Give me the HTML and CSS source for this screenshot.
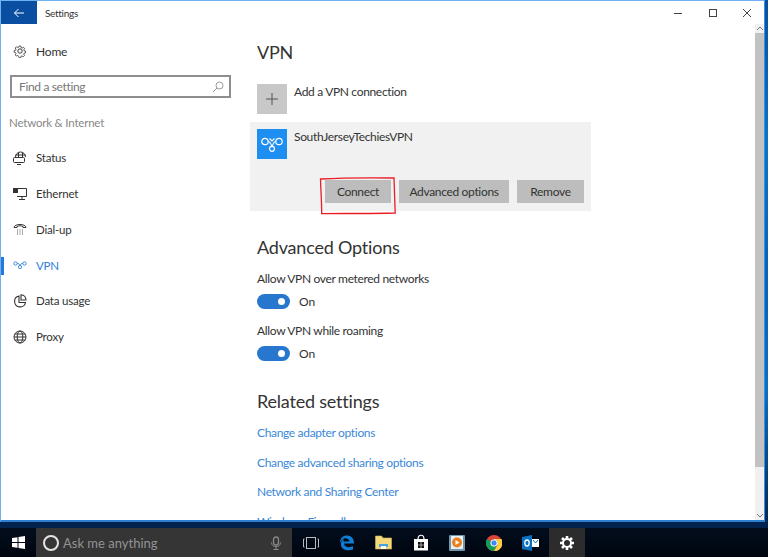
FILE: index.html
```html
<!DOCTYPE html>
<html lang="en">
<head>
<meta charset="utf-8">
<title>Settings</title>
<link rel="stylesheet" href="styles.css">
</head>
<body>
<div class="screen">
  <div class="window">
    <header class="titlebar">
      <div class="back"><svg width="12" height="12" viewBox="0 0 12 12"><path d="M11 6H1.500M5.500 2L1.500 6l4 4" fill="none" stroke="#fff" stroke-width="1"/></svg></div>
      <span class="title">Settings</span>
      <div class="controls">
        <svg width="10" height="10" viewBox="0 0 10 10"><path d="M1 5.500h8" stroke="#444" stroke-width="1"/></svg>
        <svg width="10" height="10" viewBox="0 0 10 10"><rect x="1.500" y="1.500" width="7" height="7" fill="none" stroke="#444"/></svg>
        <svg width="10" height="10" viewBox="0 0 10 10"><path d="M1 1l8 8M9 1l-8 8" stroke="#444" stroke-width="1"/></svg>
      </div>
    </header>
    <div class="body">
      <nav class="side">
        <a class="home">
          <svg class="ico" width="14" height="14" viewBox="0 0 16 16"><g fill="none" stroke="#333" stroke-width="1.100"><circle cx="8" cy="8" r="2.500"/><path d="M6.800 1.500h2.400l.4 2 1.300.6 1.800-1 1.500 1.700-1.100 1.700.4 1.200 1.900.5v2.300l-1.900.5-.5 1.300 1 1.700-1.600 1.600-1.700-1-1.300.5-.5 1.900H6.800l-.5-1.900L5 13.800l-1.700 1-1.600-1.600 1-1.700-.5-1.300-1.900-.5V7.400L2.200 7l.5-1.300-1-1.700 1.600-1.600 1.700 1 1.300-.5z" transform="translate(1.100 1.100) scale(.86)"/></g></svg>
          <span>Home</span>
        </a>
        <div class="search"><span>Find a setting</span>
          <svg width="12" height="12" viewBox="0 0 12 12"><circle cx="7.500" cy="4.500" r="3.500" fill="none" stroke="#999"/><path d="M5 7l-4 4" stroke="#999"/></svg>
        </div>
        <div class="group">Network &amp; Internet</div>
        <ul class="menu">
          <li><svg class="ico" width="14" height="14" viewBox="0 0 14 14"><g fill="none" stroke="#333"><path d="M2.500 6a5 5 0 0 1 10 0M5.500 1.500v5M9.500 1.500v5M2.500 4h10"/><rect x=".5" y="6.500" width="11" height="5" rx="1"/><path d="M4 13.500h4"/></g></svg><span>Status</span></li>
          <li><svg class="ico" width="14" height="14" viewBox="0 0 14 14"><g fill="none" stroke="#333"><path d="M4 1.500h9.500v8H4M6 12.500h6M9 9.500v3"/><rect x=".5" y="1.500" width="4" height="4" fill="#333"/></g></svg><span>Ethernet</span></li>
          <li><svg class="ico" width="14" height="14" viewBox="0 0 14 14"><path d="M1 5.500C1 1.500 13 1.500 13 5.500H10V4.500C8 3.500 6 3.500 4 4.500v1z" fill="none" stroke="#333"/><path d="M4 8h1M6.500 8h1M9 8h1M4 10h1M6.500 10h1M9 10h1M4 12h1M6.500 12h1M9 12h1" stroke="#555"/></svg><span>Dial-up</span></li>
          <li class="active"><svg class="ico" width="14" height="14" viewBox="0 0 14 14"><g fill="none" stroke="#2f80d8" stroke-width=".9"><circle cx="2.500" cy="5.500" r="1.700"/><circle cx="11.500" cy="5.500" r="1.700"/><circle cx="7" cy="9" r="1.600"/><path d="M4.200 5.500h1.300L7 7.400l1.500-1.900h1.300"/></g></svg><span>VPN</span></li>
          <li><svg class="ico" width="14" height="14" viewBox="0 0 14 14"><g fill="none" stroke="#333" stroke-width="1.100"><path d="M6 2a5.500 5.500 0 1 0 6.500 6.500H6z"/><path d="M8 .8a5.500 5.500 0 0 1 5 5.200H8z"/></g></svg><span>Data usage</span></li>
          <li><svg class="ico" width="14" height="14" viewBox="0 0 14 14"><g fill="none" stroke="#333"><circle cx="7" cy="7" r="6"/><ellipse cx="7" cy="7" rx="2.800" ry="6"/><path d="M1 7h12M1.800 4h10.400M1.800 10h10.400"/></g></svg><span>Proxy</span></li>
        </ul>
      </nav>
      <main class="content">
        <h1 class="page-title">VPN</h1>
        <div class="add-row">
          <div class="tile tile-add"><svg width="14" height="14" viewBox="0 0 14 14"><path d="M7 1v12M1 7h12" stroke="#555" stroke-width="1"/></svg></div>
          <span class="row-label">Add a VPN connection</span>
        </div>
        <section class="vpn-card">
          <div class="vpn-top">
            <div class="tile tile-vpn"><svg width="22" height="16" viewBox="0 0 22 16"><g fill="none" stroke="#fff" stroke-width="1.200"><circle cx="4" cy="5.500" r="3.200"/><circle cx="18" cy="5.500" r="3.200"/><circle cx="11" cy="12.800" r="2.500"/><path d="M7.200 5.500c1.600 0 2.400 1.600 3.800 4.800M14.800 5.500c-1.600 0-2.400 1.600-3.800 4.800M8.500 2.500L11 5l2.500-2.500"/></g></svg></div>
            <span class="row-label">SouthJerseyTechiesVPN</span>
          </div>
          <div class="vpn-actions">
            <button class="btn btn-connect">Connect</button>
            <button class="btn btn-adv">Advanced options</button>
            <button class="btn btn-rem">Remove</button>
            <svg class="scribble" width="78" height="38" viewBox="0 0 78 38"><path d="M1.500 2C20 1 58 .8 75 1c.4 11 .8 23 1.200 35-20 .6-50 .4-73.500 .6C2.700 25 1.800 13 1.500 2z" fill="none" stroke="#ea1c26" stroke-width="1.300"/></svg>
          </div>
        </section>
        <h2 class="section first">Advanced Options</h2>
        <div class="opt-label">Allow VPN over metered networks</div>
        <div class="toggle-row"><span class="toggle"></span><span>On</span></div>
        <div class="opt-label second">Allow VPN while roaming</div>
        <div class="toggle-row"><span class="toggle"></span><span>On</span></div>
        <h2 class="section related">Related settings</h2>
        <a class="link">Change adapter options</a>
        <a class="link">Change advanced sharing options</a>
        <a class="link">Network and Sharing Center</a>
        <a class="link">Windows Firewall</a>
      </main>
      <div class="scrollbar"><div class="arrow"><svg width="8" height="5" viewBox="0 0 8 5"><path d="M1 4l3-3 3 3" fill="none" stroke="#777"/></svg></div><div class="thumb"></div><div class="track"></div><div class="arrow"><svg width="8" height="5" viewBox="0 0 8 5"><path d="M1 1l3 3 3-3" fill="none" stroke="#777"/></svg></div></div>
    </div>
  </div>
  <footer class="taskbar">
    <div class="start"><svg width="13" height="13" viewBox="0 0 13 13"><path d="M0 2l5.500-.8V6H0zM6.500 1.100L13 0v6H6.500zM0 7h5.500v4.800L0 11zM6.500 7H13v6l-6.500-1z" fill="#fff"/></svg></div>
    <div class="ask">
      <span class="cortana"></span>
      <span class="ask-text">Ask me anything</span>
      <svg width="10" height="14" viewBox="0 0 10 14"><rect x="2.500" y="1" width="5" height="8" rx="2.500" fill="none" stroke="#8a8a8a" stroke-width="1.300"/><path d="M.5 6.500C.5 12 9.500 12 9.500 6.500M5 10.500V13M2.500 13.500h5" fill="none" stroke="#8a8a8a"/></svg>
    </div>
    <div class="tasks">
      <div class="task"><svg width="16" height="12" viewBox="0 0 16 12"><g fill="none" stroke="#bbb"><rect x="3.500" y=".5" width="9" height="11"/><path d="M1.500 2H.5v8h1M14.500 2h1v8h-1"/></g></svg></div>
      <div class="task"><svg width="16" height="16" viewBox="0 0 16 16"><path d="M1 8C1 3 4 .5 8 .5c4.500 0 7 3 7 8H5c.2 4 6 4.500 9 2.500v3.500c-5 2-12.500 .5-12-5.500C2 6 3.500 5 5 4c-.5 1-.5 2-.5 2.500h6C10.500 3.500 6 2 3.500 4.500 2.500 5.500 1.500 6.500 1 8z" fill="#0f7fd6"/></svg></div>
      <div class="task"><svg width="17" height="15" viewBox="0 0 17 15"><path d="M.5 1h6l1.500 2h8.500v11H.5z" fill="#f5d77c" stroke="#d9b452" stroke-width=".6"/><rect x="4" y="9" width="9" height="3" fill="#4aa3d8"/><rect x="6" y="11" width="5" height="3" fill="#fff"/></svg></div>
      <div class="task"><svg width="16" height="17" viewBox="0 0 16 17"><path d="M1 5h14v11.500H1z" fill="#fff"/><path d="M5 5c0-5 6-5 6 0" fill="none" stroke="#fff" stroke-width="1.200"/><path d="M5 8h2.700v2.700H5zM8.300 8H11v2.700H8.300zM5 11.300h2.700V14H5zM8.300 11.300H11V14H8.300z" fill="#111"/></svg></div>
      <div class="task"><svg width="16" height="16" viewBox="0 0 16 16"><rect width="16" height="16" rx="1" fill="#6e97ac"/><rect x="2" y="1" width="12" height="13" fill="#e9f0f3"/><circle cx="8" cy="7.500" r="5" fill="#ef7f1a"/><path d="M6.500 5l4 2.500-4 2.500z" fill="#fff"/></svg></div>
      <div class="task"><svg width="16" height="16" viewBox="0 0 16 16"><circle cx="8" cy="8" r="8" fill="#db4437"/><path d="M8 8L1 12A8 8 0 0 1 1 4z" fill="#0f9d58"/><path d="M8 8L1.100 12A8 8 0 0 0 8 16l3.500-7z" fill="#0f9d58"/><path d="M8 4h7.500A8 8 0 0 1 8 16l3.500-6z" fill="#ffcd40"/><circle cx="8" cy="8" r="3.200" fill="#4285f4" stroke="#fff"/></svg></div>
      <div class="task"><svg width="17" height="16" viewBox="0 0 17 16"><path d="M0 2l10-2v16L0 14z" fill="#0b6fc2"/><ellipse cx="5" cy="8" rx="2.200" ry="3" fill="none" stroke="#fff" stroke-width="1.300"/><rect x="10" y="4" width="7" height="8" fill="#fff"/><path d="M11 5l2.500 3L16 5" fill="none" stroke="#0b6fc2"/></svg></div>
      <div class="task task-active"><svg width="16" height="16" viewBox="0 0 16 16"><circle cx="8" cy="8" r="4" fill="none" stroke="#fff" stroke-width="2"/><path d="M8 1v3M8 12v3M1 8h3M12 8h3M3 3l2.200 2.200M10.800 10.800L13 13M13 3l-2.200 2.200M5.200 10.800L3 13" stroke="#fff" stroke-width="2.600"/></svg></div>
    </div>
  </footer>
</div>
</body>
</html>
```
FILE: styles.css
```css
* { box-sizing: border-box; }
html, body { margin: 0; padding: 0; }
body { width: 768px; height: 557px; overflow: hidden; font-family: Lato, "Open Sans", sans-serif; color: #333; }
.screen { width: 768px; height: 557px; display: flex; flex-direction: column; background: linear-gradient(#0a4f9e, #0a74c6 25%, #0a62b4 50%, #0a70c2 70%, #02244c 528px); }
.window { width: 765px; height: 522px; background: #fff; border: 1px solid #6fb1f3; border-width: 1px 1px 2px 1px; border-bottom-color: #2d7fd0; border-right-color: #3f8fe0; display: flex; flex-direction: column; overflow: hidden; flex: none; }
.titlebar { height: 23px; flex: none; display: flex; align-items: center; }
.back { width: 36px; height: 23px; background: #0a4ea1; display: flex; align-items: center; justify-content: center; }
.title { font-size: 10px; letter-spacing: -0.3px; margin-left: 8px; color: #333; }
.controls { margin-left: auto; display: flex; gap: 24.500px; padding-right: 12px; align-items: center; }
.body { flex: 1; display: flex; min-height: 0; }
.side { width: 249px; flex: none; display: flex; flex-direction: column; }
.home { display: flex; align-items: center; height: 20px; margin-top: 17px; padding-left: 12px; gap: 9px; font-size: 12px; letter-spacing: -0.2px; }
.search { margin: 14px 0 0 9px; width: 221px; height: 23px; border: 2px solid #8e8e8e; display: flex; align-items: center; justify-content: space-between; padding: 0 5px 0 7px; font-size: 12px; letter-spacing: -0.35px; color: #777; }
.group { margin: 17px 0 0 8px; font-size: 11.500px; letter-spacing: -0.2px; line-height: 16px; color: #888; }
.menu { list-style: none; margin: 9px 0 0; padding: 0; }
.menu li { height: 35.750px; display: flex; align-items: center; padding-left: 12px; font-size: 11.500px; letter-spacing: -0.2px; gap: 9px; }
.menu .active { color: #2f80d8; position: relative; }
.menu .active::before { content: ""; position: absolute; left: 0; top: 10px; width: 3px; height: 18px; background: #2679d4; }
.content { flex: 1; padding: 14px 0 0 7px; min-width: 0; overflow: hidden; }
.page-title { margin: 0; font-size: 18px; letter-spacing: -0.2px; font-weight: 400; line-height: 28px; color: #333; }
.add-row { display: flex; margin-top: 18px; gap: 7px; }
.tile { width: 30px; height: 30px; flex: none; display: flex; align-items: center; justify-content: center; }
.tile-add { background: #c8c8c8; }
.row-label { font-size: 12px; letter-spacing: -0.33px; line-height: 16px; }
.vpn-card { width: 341px; height: 89px; background: #f1f1f1; margin: 8px 0 0 -7px; padding: 7px 7px 0 7px; display: flex; flex-direction: column; }
.vpn-top { display: flex; gap: 7px; }
.tile-vpn { background: #1f8ef1; }
.vpn-actions { display: flex; justify-content: flex-end; margin-top: 21px; gap: 8px; position: relative; }
.btn { height: 23px; border: 0; background: #bdbdbd; font: 12px Lato, "Open Sans", sans-serif; letter-spacing: -0.33px; color: #333; padding: 0; }
.btn-connect { width: 66px; }
.btn-adv { width: 110px; }
.btn-rem { width: 67px; }
.scribble { position: absolute; left: 62px; top: -3px; }
.section { margin: 0; font-size: 18px; letter-spacing: -0.2px; font-weight: 400; line-height: 26px; color: #333; }
.first { margin-top: 23px; }
.opt-label { margin-top: 11px; font-size: 12px; letter-spacing: -0.33px; line-height: 16px; }
.opt-label.second { margin-top: 14px; }
.toggle-row { display: flex; align-items: center; gap: 9px; font-size: 12px; margin-top: 6px; height: 16px; }
.toggle { width: 33px; height: 15px; border-radius: 8px; background: #2777cf; position: relative; }
.toggle::after { content: ""; position: absolute; right: 5px; top: 4px; width: 7px; height: 7px; border-radius: 50%; background: #fff; }
.related { margin-top: 27px; }
.link { display: block; font-size: 12px; letter-spacing: -0.33px; line-height: 16px; color: #3b88d8; margin-top: 13.700px; }
.section + .link { margin-top: 11px; }
.scrollbar { width: 9px; flex: none; margin-left: auto; display: flex; flex-direction: column; background: #f0f0f0; }
.arrow { height: 9px; display: flex; align-items: center; justify-content: center; flex: none; }
.thumb { height: 434px; flex: none; background: #c2c2c2; }
.track { flex: 1; }
.taskbar { flex: 1; display: flex; align-items: stretch; padding-top: 6px; background: linear-gradient(#02224e 0, #02224e 6px, #020d1c 6px, #000610 100%); }
.start { width: 36px; display: flex; align-items: center; justify-content: center; }
.ask { width: 256px; background: #353535; display: flex; align-items: center; padding: 0 11px 0 7px; font-size: 13px; }
.cortana { width: 16px; height: 16px; border: 2px solid #e4e4e4; border-radius: 50%; flex: none; }
.ask-text { margin-left: 4px; flex: 1; color: #939393; padding-top: 1px; }
.tasks { display: flex; flex: 1; padding-left: 0.500px; }
.task { width: 36.600px; display: flex; align-items: center; justify-content: center; flex: none; }
.task-active { width: 36px; background: #2c2c2c; }
```
